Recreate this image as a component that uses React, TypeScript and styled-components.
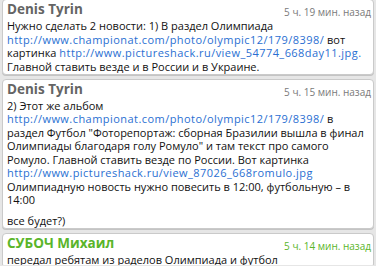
import { createGlobalStyle, styled } from 'styled-components';

const GlobalStyle = createGlobalStyle`
  body {
    margin: 0;
    padding: 0;
    background: #e6e6e6;
    font-family: 'Open Sans', 'DejaVu Sans', sans-serif;
  }
`;

const Feed = styled.div`
  width: 376px;
  height: 266px;
  overflow: hidden;
  display: flex;
  flex-direction: column;
  gap: 4px;
  padding: 0 2px;
  box-sizing: border-box;
  margin-top: -1px;
`;

const Card = styled.div`
  flex-shrink: 0;
  background: #fff;
  border: 1px solid #cacaca;
  border-radius: 4px;
  box-shadow: 0 1px 0 #c4c4c4;
  padding: 1px 2px 0.5px 4px;
`;

const Head = styled.div`
  display: flex;
  justify-content: space-between;
  align-items: flex-start;
  margin-bottom: 1px;
`;

const Author = styled.span<{ $green?: boolean }>`
  font-weight: bold;
  font-size: 13.5px;
  line-height: 16px;
  color: ${(p) => (p.$green ? '#5ab52a' : '#646464')};
`;

const Time = styled.span<{ $green?: boolean }>`
  font-size: 10px;
  line-height: 12px;
  margin-top: 5px;
  color: ${(p) => (p.$green ? '#5ab52a' : '#7a7a7a')};
`;

const Body = styled.div`
  font-size: 11px;
  line-height: 13.5px;
  color: #111;
`;

const Para = styled.p`
  margin: 0;
  & + & {
    margin-top: 7px;
  }
`;

const Link = styled.a`
  color: #2a6fd2;
  text-decoration: none;
  letter-spacing: 0.45px;
`;

export default function App() {
  return (
    <>
      <GlobalStyle />
      <Feed>
        <Card>
          <Head>
            <Author>Denis Tyrin</Author>
            <Time>5 ч. 19 мин. назад</Time>
          </Head>
          <Body>
            <Para>
              Нужно сделать 2 новости: 1) В раздел Олимпиада{' '}
              <Link href="#">http://www.championat.com/photo/olympic12/179/8398/</Link> вот картинка{' '}
              <Link href="#">http://www.pictureshack.ru/view_54774_668day11.jpg.</Link>{' '}
              Главной ставить везде и в России и в Украине.
            </Para>
          </Body>
        </Card>
        <Card>
          <Head>
            <Author>Denis Tyrin</Author>
            <Time>5 ч. 15 мин. назад</Time>
          </Head>
          <Body>
            <Para>
              2) Этот же альбом{' '}
              <Link href="#">http://www.championat.com/photo/olympic12/179/8398/</Link> в раздел Футбол
              "Фоторепортаж: сборная Бразилии вышла в финал Олимпиады благодаря голу Ромуло" и там текст
              про самого Ромуло. Главной ставить везде по России. Вот картинка{' '}
              <Link href="#">http://www.pictureshack.ru/view_87026_668romulo.jpg</Link> Олимпиадную
              новость нужно повесить в 12:00, футбольную – в 14:00
            </Para>
            <Para>все будет?)</Para>
          </Body>
        </Card>
        <Card>
          <Head>
            <Author $green>СУБОЧ Михаил</Author>
            <Time $green>5 ч. 14 мин. назад</Time>
          </Head>
          <Body>
            <Para>передал ребятам из раделов Олимпиада и футбол</Para>
          </Body>
        </Card>
      </Feed>
    </>
  );
}
